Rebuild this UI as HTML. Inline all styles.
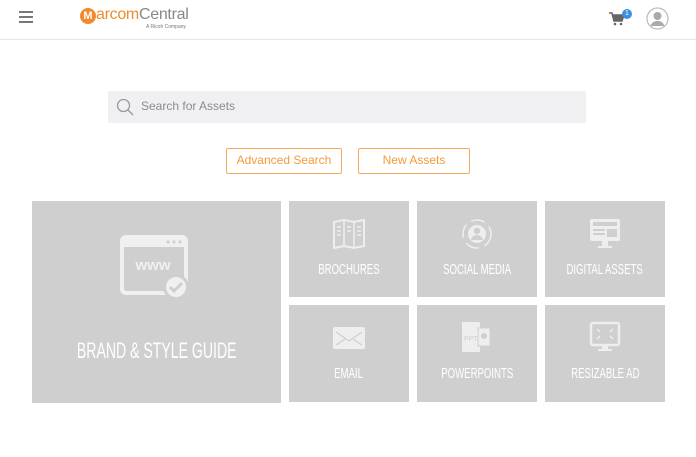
<!DOCTYPE html>
<html><head><style>
body{margin:0;width:696px;height:457px;background:#fff;font-family:"Liberation Sans",sans-serif;position:relative;overflow:hidden}
.a{position:absolute}
.tile{position:absolute;background:#cfcfcf}
.lbl{position:absolute;left:0;right:0;text-align:center;color:#fff;white-space:nowrap}
.lbl span{display:inline-block;transform:scaleX(0.64)}
.btn{position:absolute;border:1.5px solid #f6a95a;border-radius:2px;color:#f39a3a;font-size:12px;text-align:center;line-height:23px;box-sizing:border-box;height:26px;top:148px}
</style></head><body>
<div class="a" style="left:0;top:39px;width:696px;height:1px;background:#e6e6e6"></div>
<div class="a" style="left:19px;top:11px;width:14px;height:2px;background:#777;box-shadow:0 5px 0 #777,0 10px 0 #777"></div>
<div class="a" style="left:80px;top:8px;width:16px;height:16px;border-radius:50%;background:#f08a2e;color:#fff;font-size:11px;font-weight:bold;text-align:center;line-height:16px">M</div>
<div class="a" style="left:96px;top:6px;font-size:16px;letter-spacing:-0.3px"><span style="color:#f08a2e">arcom</span><span style="color:#888">Central</span></div>
<div class="a" style="left:146px;top:24px;font-size:5px;color:#777">A Ricoh Company</div>
<svg class="a" style="left:609px;top:12px" width="16" height="14" viewBox="0 0 16 14"><path d="M0 1h3l2 8h8l2-6H4" fill="none" stroke="#666" stroke-width="1.6"/><path d="M4 3h11l-2 6H5z" fill="#666"/><circle cx="6" cy="12" r="1.3" fill="#666"/><circle cx="12" cy="12" r="1.3" fill="#666"/></svg>
<div class="a" style="left:622px;top:9px;width:10px;height:10px;border-radius:50%;background:#3d8fe0;color:#fff;font-size:7px;text-align:center;line-height:10px">1</div>
<svg class="a" style="left:646px;top:7px" width="23" height="23" viewBox="0 0 23 23"><circle cx="11.5" cy="11.5" r="10.5" fill="#fff" stroke="#bbb" stroke-width="1.2"/><circle cx="11.5" cy="9" r="4" fill="#aaa"/><path d="M4.5 19c1.5-4 4-5 7-5s5.5 1 7 5" fill="#aaa"/></svg>
<div class="a" style="left:108px;top:91px;width:478px;height:32px;background:#f0f0f3;border-radius:2px"></div>
<svg class="a" style="left:116px;top:98px" width="18" height="18" viewBox="0 0 18 18"><circle cx="7.5" cy="7.5" r="6" fill="none" stroke="#999" stroke-width="1.3"/><path d="M12 12l5 5" stroke="#999" stroke-width="1.3"/></svg>
<div class="a" style="left:141px;top:99px;font-size:12px;color:#8a8a95">Search for Assets</div>
<div class="btn" style="left:226px;width:116px">Advanced Search</div>
<div class="btn" style="left:358px;width:112px">New Assets</div>

<div class="tile" style="left:32px;top:201px;width:249px;height:202px">
<svg class="a" style="left:88px;top:34px" width="74" height="68" viewBox="0 0 74 68"><rect x="2" y="2" width="64" height="56" rx="4" fill="none" stroke="#f0f0f0" stroke-width="4"/><rect x="2" y="2" width="64" height="10" fill="#f0f0f0"/><circle cx="48" cy="7" r="1.6" fill="#cfcfcf"/><circle cx="54" cy="7" r="1.6" fill="#cfcfcf"/><circle cx="60" cy="7" r="1.6" fill="#cfcfcf"/><text x="33" y="35" font-size="15" font-weight="bold" fill="#f0f0f0" text-anchor="middle" font-family="Liberation Sans">www</text><circle cx="56" cy="52" r="13" fill="#cfcfcf"/><circle cx="56" cy="52" r="10" fill="#f0f0f0"/><path d="M50 52l4 4 8-8" fill="none" stroke="#cfcfcf" stroke-width="3"/></svg>
<div class="lbl" style="top:137px;font-size:22px"><span>BRAND &amp; STYLE GUIDE</span></div></div>

<div class="tile" style="left:289px;top:201px;width:120px;height:96px">
<svg class="a" style="left:44px;top:17px" width="32" height="32" viewBox="0 0 32 32"><path d="M1 4l10-2 10 2 10-2v26l-10 2-10-2-10 2z" fill="none" stroke="#eee" stroke-width="2"/><path d="M11 2v26M21 4v26M4 9h4M4 13h4M4 17h4M14 9h4M14 13h4M24 9h4M24 13h4M24 17h4" stroke="#eee" stroke-width="1.5"/></svg>
<div class="lbl" style="top:60px;font-size:15px"><span>BROCHURES</span></div></div>
<div class="tile" style="left:417px;top:201px;width:120px;height:96px">
<svg class="a" style="left:43px;top:16px" width="34" height="34" viewBox="0 0 34 34"><circle cx="17" cy="17" r="14" fill="none" stroke="#eee" stroke-width="1.5" stroke-dasharray="14 6"/><circle cx="17" cy="17" r="9" fill="#eee"/><circle cx="17" cy="14" r="3.2" fill="#cfcfcf"/><path d="M11 23c1-4 4-5 6-5s5 1 6 5z" fill="#cfcfcf"/></svg>
<div class="lbl" style="top:60px;font-size:15px"><span>SOCIAL MEDIA</span></div></div>
<div class="tile" style="left:545px;top:201px;width:120px;height:96px">
<svg class="a" style="left:43px;top:16px" width="34" height="34" viewBox="0 0 34 34"><rect x="2" y="2" width="30" height="22" rx="2" fill="#eee"/><rect x="5" y="5" width="24" height="4" fill="#cfcfcf"/><rect x="5" y="12" width="12" height="2" fill="#cfcfcf"/><rect x="5" y="16" width="12" height="2" fill="#cfcfcf"/><rect x="19" y="12" width="10" height="8" fill="#cfcfcf"/><rect x="14" y="24" width="6" height="5" fill="#eee"/><rect x="10" y="29" width="14" height="2" fill="#eee"/></svg>
<div class="lbl" style="top:60px;font-size:15px"><span>DIGITAL ASSETS</span></div></div>

<div class="tile" style="left:289px;top:305px;width:120px;height:97px">
<svg class="a" style="left:44px;top:22px" width="32" height="22" viewBox="0 0 32 22"><rect x="0" y="0" width="32" height="22" rx="2" fill="#eee"/><path d="M3 5l13 9 13-9M3 18l9-6M29 18l-9-6" fill="none" stroke="#cfcfcf" stroke-width="1.2"/></svg>
<div class="lbl" style="top:60px;font-size:15px"><span>EMAIL</span></div></div>
<div class="tile" style="left:417px;top:305px;width:120px;height:97px">
<svg class="a" style="left:43px;top:15px" width="34" height="34" viewBox="0 0 34 34"><rect x="2" y="2" width="18" height="30" fill="#eee"/><rect x="18" y="8" width="12" height="18" fill="#eee" stroke="#cfcfcf"/><text x="4" y="21" font-size="7" fill="#cfcfcf" font-family="Liberation Sans">PPT</text><circle cx="24" cy="16" r="3" fill="#cfcfcf"/></svg>
<div class="lbl" style="top:60px;font-size:15px"><span>POWERPOINTS</span></div></div>
<div class="tile" style="left:545px;top:305px;width:120px;height:97px">
<svg class="a" style="left:43px;top:15px" width="34" height="34" viewBox="0 0 34 34"><rect x="3" y="3" width="28" height="22" rx="2" fill="none" stroke="#eee" stroke-width="2.5"/><path d="M9 9l3 3M25 9l-3 3M9 19l3-3M25 19l-3-3" stroke="#eee" stroke-width="1.5"/><rect x="14" y="25" width="6" height="4" fill="#eee"/><rect x="10" y="29" width="14" height="2" fill="#eee"/></svg>
<div class="lbl" style="top:60px;font-size:15px"><span>RESIZABLE AD</span></div></div>
</body></html>
